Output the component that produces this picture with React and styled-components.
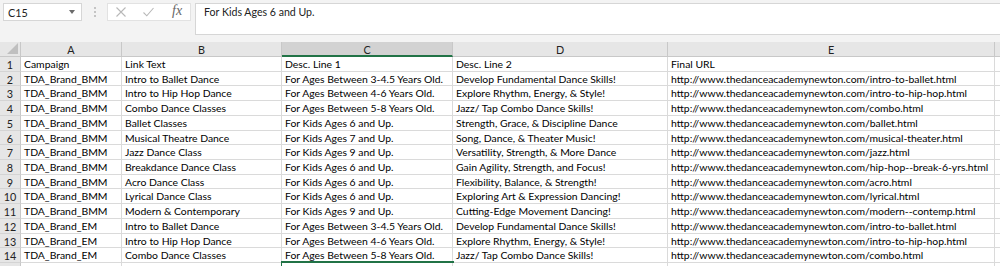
import React from "react";
import styled, { createGlobalStyle } from "styled-components";

const GlobalStyle = createGlobalStyle`
  * {
    margin: 0;
    padding: 0;
    box-sizing: border-box;
  }
  body {
    background: #ffffff;
    font-family: Lato, "Liberation Sans", sans-serif;
    overflow: hidden;
  }
`;

const COLS = [21, 101, 160, 171, 215, 327, 60];
const LETTERS = ["A", "B", "C", "D", "E", ""];
const URL = "http://www.thedanceacademynewton.com/";

const rows = [
  ["Campaign", "Link Text", "Desc. Line 1", "Desc. Line 2", "Final URL"],
  ["TDA_Brand_BMM", "Intro to Ballet Dance", "For Ages Between 3-4.5 Years Old.", "Develop Fundamental Dance Skills!", URL + "intro-to-ballet.html"],
  ["TDA_Brand_BMM", "Intro to Hip Hop Dance", "For Ages Between 4-6 Years Old.", "Explore Rhythm, Energy, & Style!", URL + "intro-to-hip-hop.html"],
  ["TDA_Brand_BMM", "Combo Dance Classes", "For Ages Between 5-8 Years Old.", "Jazz/ Tap Combo Dance Skills!", URL + "combo.html"],
  ["TDA_Brand_BMM", "Ballet Classes", "For Kids Ages 6 and Up.", "Strength, Grace, & Discipline Dance", URL + "ballet.html"],
  ["TDA_Brand_BMM", "Musical Theatre Dance", "For Kids Ages 7 and Up.", "Song, Dance, & Theater Music!", URL + "musical-theater.html"],
  ["TDA_Brand_BMM", "Jazz Dance Class", "For Kids Ages 9 and Up.", "Versatility, Strength, & More Dance", URL + "jazz.html"],
  ["TDA_Brand_BMM", "Breakdance Dance Class", "For Kids Ages 6 and Up.", "Gain Agility, Strength, and Focus!", URL + "hip-hop--break-6-yrs.html"],
  ["TDA_Brand_BMM", "Acro Dance Class", "For Kids Ages 6 and Up.", "Flexibility, Balance, & Strength!", URL + "acro.html"],
  ["TDA_Brand_BMM", "Lyrical Dance Class", "For Kids Ages 6 and Up.", "Exploring Art & Expression Dancing!", URL + "lyrical.html"],
  ["TDA_Brand_BMM", "Modern & Contemporary", "For Kids Ages 9 and Up.", "Cutting-Edge Movement Dancing!", URL + "modern--contemp.html"],
  ["TDA_Brand_EM", "Intro to Ballet Dance", "For Ages Between 3-4.5 Years Old.", "Develop Fundamental Dance Skills!", URL + "intro-to-ballet.html"],
  ["TDA_Brand_EM", "Intro to Hip Hop Dance", "For Ages Between 4-6 Years Old.", "Explore Rhythm, Energy, & Style!", URL + "intro-to-hip-hop.html"],
  ["TDA_Brand_EM", "Combo Dance Classes", "For Ages Between 5-8 Years Old.", "Jazz/ Tap Combo Dance Skills!", URL + "combo.html"],
];

const Page = styled.div`
  width: 1000px;
  height: 266px;
  overflow: hidden;
  background: #f3f3f3;
  font-size: 10.4px;
`;

const Toolbar = styled.div`
  display: flex;
  align-items: flex-start;
  height: 42px;
  padding: 3px 0 0 3px;
  background: #f3f3f3;
`;

const NameBox = styled.div`
  width: 79px;
  height: 18px;
  background: #fff;
  border: 1px solid #d6d6d6;
  display: flex;
  align-items: center;
  justify-content: space-between;
  padding: 0 4px 0 4px;
  font-size: 10.8px;
  color: #222;
`;

const Caret = styled.span`
  width: 0;
  height: 0;
  border-left: 3.5px solid transparent;
  border-right: 3.5px solid transparent;
  border-top: 4px solid #6a6a6a;
  margin-right: 2px;
`;

const Grip = styled.div`
  width: 25px;
  height: 18px;
  display: flex;
  flex-direction: column;
  align-items: center;
  justify-content: center;
  gap: 2px;
  span {
    width: 2px;
    height: 2px;
    background: #c4c4c4;
  }
`;

const ButtonBox = styled.div`
  width: 84px;
  height: 18px;
  background: #fff;
  border: 1px solid #e2e2e2;
  display: flex;
  align-items: center;
  gap: 17px;
  padding-left: 8px;
`;

const Fx = styled.span`
  font-family: "Liberation Serif", serif;
  font-style: italic;
  font-size: 14px;
  color: #666;
  margin-top: -2px;
  margin-left: 1px;
`;

const FormulaInput = styled.div`
  flex: 1;
  height: 32px;
  margin-left: 4px;
  background: #fff;
  border: 1px solid #d6d6d6;
  border-right: none;
  padding: 2px 0 0 8px;
  line-height: 13px;
  font-size: 10.6px;
  color: #222;
`;

const Row = styled.div`
  display: flex;
  height: ${(p) => p.$h}px;
`;

const Corner = styled.div`
  width: ${COLS[0]}px;
  flex: none;
  position: relative;
  background: #e6e6e6;
  border-right: 1px solid #c8c8c8;
  border-bottom: 1px solid #c8c8c8;
  &::after {
    content: "";
    position: absolute;
    right: 2px;
    bottom: 2px;
    width: 0;
    height: 0;
    border-left: 11px solid transparent;
    border-bottom: 11px solid #bfbfbf;
  }
`;

const ColHead = styled.div`
  width: ${(p) => p.$w}px;
  flex: none;
  background: ${(p) => (p.$active ? "#d2d2d2" : "#e6e6e6")};
  border-right: 1px solid #c8c8c8;
  border-bottom: ${(p) => (p.$active ? "2px solid #217346" : "1px solid #c8c8c8")};
  color: #222;
  font-size: 10.8px;
  line-height: 15px;
  text-align: center;
`;

const RowHead = styled.div`
  width: ${COLS[0]}px;
  flex: none;
  background: #e6e6e6;
  border-right: 1px solid #c8c8c8;
  border-bottom: 1px solid #d4d4d4;
  color: #222;
  font-size: 10.8px;
  line-height: 15px;
  text-align: center;
`;

const Cell = styled.div`
  width: ${(p) => p.$w}px;
  flex: none;
  background: #fff;
  border-right: 1px solid #dadada;
  border-bottom: 1px solid #dadada;
  padding-left: 3px;
  line-height: 15px;
  color: #000;
  white-space: nowrap;
  position: relative;
  z-index: ${(p) => (p.$over ? 1 : 0)};
  box-shadow: ${(p) => (p.$sel ? "0 -1px 0 1px #217346" : "none")};
`;

const Cross = () => (
  <svg width="10" height="10" viewBox="0 0 10 10">
    <path d="M0.5 0.5 L9.5 9.5 M9.5 0.5 L0.5 9.5" stroke="#b8b8b8" strokeWidth="1.1" fill="none" />
  </svg>
);

const Check = () => (
  <svg width="11" height="10" viewBox="0 0 11 10">
    <path d="M0.5 5.5 L3.8 8.8 L10.5 1" stroke="#b8b8b8" strokeWidth="1.1" fill="none" />
  </svg>
);

export default function App() {
  return (
    <Page>
      <GlobalStyle />
      <Toolbar>
        <NameBox>
          C15
          <Caret />
        </NameBox>
        <Grip>
          <span />
          <span />
          <span />
        </Grip>
        <ButtonBox>
          <Cross />
          <Check />
          <Fx>fx</Fx>
        </ButtonBox>
        <FormulaInput>For Kids Ages 6 and Up.</FormulaInput>
      </Toolbar>
      <Row $h={15}>
        <Corner />
        {LETTERS.map((l, i) => (
          <ColHead key={i} $w={COLS[i + 1]} $active={l === "C"}>
            {l}
          </ColHead>
        ))}
      </Row>
      {rows.map((r, ri) => (
        <Row key={ri} $h={14.72}>
          <RowHead>{ri + 1}</RowHead>
          {r.map((v, ci) => (
            <Cell key={ci} $w={COLS[ci + 1]} $over={ci === 4}>
              {v}
            </Cell>
          ))}
          <Cell $w={COLS[6]} />
        </Row>
      ))}
      <Row $h={14.72}>
        <RowHead />
        {COLS.slice(1).map((w, ci) => (
          <Cell key={ci} $w={w} $sel={ci === 2} />
        ))}
      </Row>
    </Page>
  );
}
